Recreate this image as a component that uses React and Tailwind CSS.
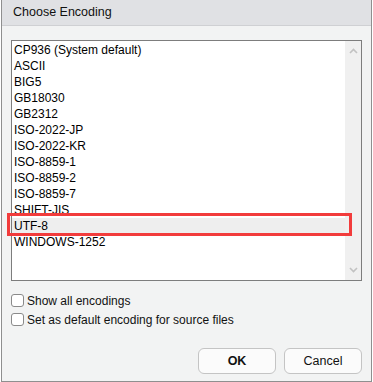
import React from 'react';

const ENCODINGS = [
  'CP936 (System default)',
  'ASCII',
  'BIG5',
  'GB18030',
  'GB2312',
  'ISO-2022-JP',
  'ISO-2022-KR',
  'ISO-8859-1',
  'ISO-8859-2',
  'ISO-8859-7',
  'SHIFT-JIS',
  'UTF-8',
  'WINDOWS-1252',
];

const FONT = { fontFamily: '"Segoe UI", "Liberation Sans", Arial, sans-serif' };

function Chevron({ up }) {
  return (
    <svg width="9" height="6" viewBox="0 0 9 6" className="text-[#c2c2c2]">
      <path
        d={up ? 'M1 5 L4.5 1.5 L8 5' : 'M1 1 L4.5 4.5 L8 1'}
        fill="none"
        stroke="currentColor"
        strokeWidth="1.6"
      />
    </svg>
  );
}

function Check({ label }) {
  return (
    <label className="flex items-center gap-[3px] h-[19px]">
      <span className="w-[13px] h-[13px] rounded-[3px] border border-[#8a8a8a] bg-white" />
      <span className="text-[12px] text-[#111]">{label}</span>
    </label>
  );
}

export default function App() {
  return (
    <div className="w-[373px] h-[382px] bg-white" style={FONT}>
      <div className="ml-px w-[371px] h-[382px] border-r border-b border-l border-[#8f8f8f] bg-[#f2f3f3] flex flex-col relative">
        <div className="h-[26px] bg-[#e0e1e4] border-b border-[#cfd0d3] flex items-center pl-[11px] text-[12.5px] text-[#111]">
          Choose Encoding
        </div>

        <div className="mt-[14px] ml-[9px] w-[351px] h-[241px] border border-[#7d7d7d] bg-white flex">
          <div className="flex-1 pt-[1px]">
            {ENCODINGS.map((enc) => (
              <div
                key={enc}
                className={
                  'h-[16px] leading-[16px] pl-[2px] text-[12px] text-[#000] ' +
                  (enc === 'UTF-8' ? 'bg-[#eeeeee]' : '')
                }
              >
                {enc}
              </div>
            ))}
          </div>
          <div className="w-[16px] bg-[#f0f0f0] flex flex-col items-center justify-between py-[7px]">
            <Chevron up />
            <Chevron />
          </div>
        </div>

        <div className="mt-[10px] ml-[9px] flex flex-col">
          <Check label="Show all encodings" />
          <Check label="Set as default encoding for source files" />
        </div>

        <div className="mt-auto mb-[7px] mr-[9px] flex justify-end gap-[8px]">
          <button className="w-[78px] h-[26px] rounded-[6px] border border-[#c4c4c4] bg-[#fbfbfb] text-[12.5px] font-bold text-[#111]">
            OK
          </button>
          <button className="w-[78px] h-[26px] rounded-[6px] border border-[#c4c4c4] bg-[#fbfbfb] text-[12.5px] text-[#111]">
            Cancel
          </button>
        </div>

        <div className="absolute left-[5px] top-[213px] w-[345px] h-[23px] border-[3px] border-[#f23c3c]" />
      </div>
    </div>
  );
}
